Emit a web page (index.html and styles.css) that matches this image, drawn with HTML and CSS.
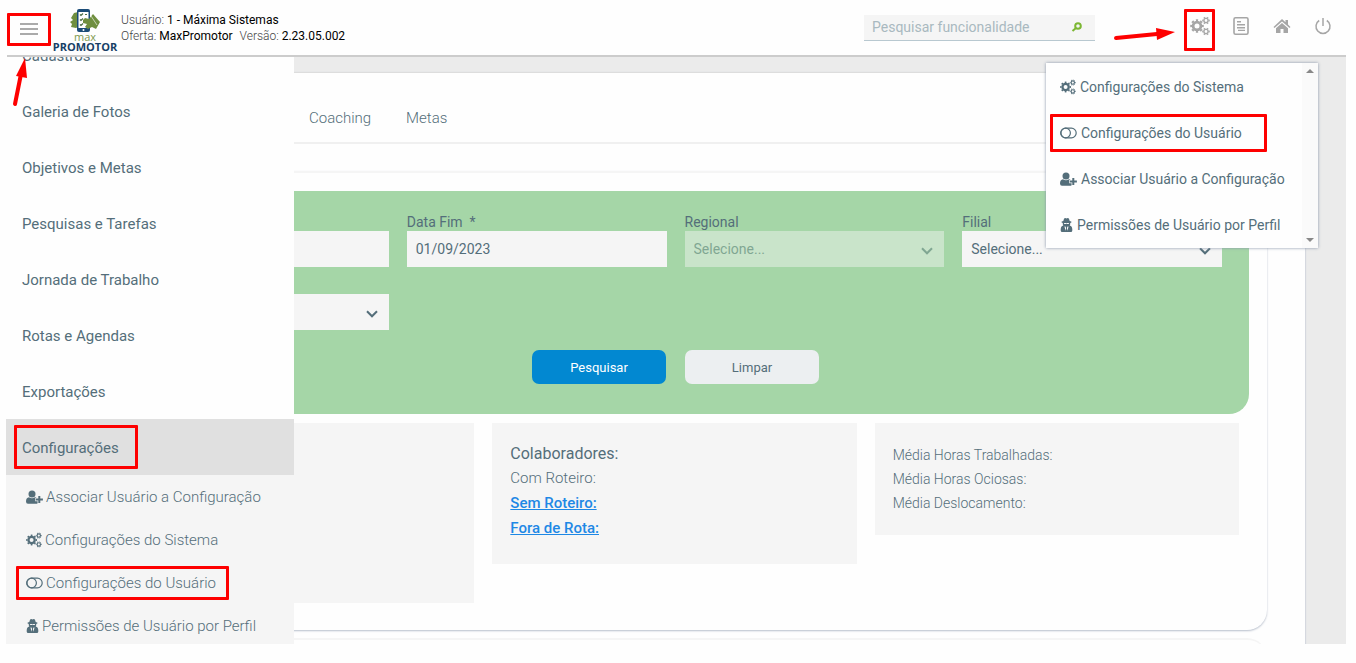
FILE: index.html
```
<!DOCTYPE html>
<html lang="pt-BR">
<head>
	<meta charset="utf-8"/>
	<title>MaxPromotor</title>
	<link rel="stylesheet" href="styles.css">
</head>
<body>
	<!-- shared icons -->
	<svg class="sprite" aria-hidden="true">
		<symbol id="i-cogs" viewBox="0 0 20 20">
			<g fill="none" stroke="currentColor">
				<circle cx="7" cy="10" r="3.9" stroke-width="2.8"/>
				<circle cx="7" cy="10" r="5.9" stroke-width="1.8" pathLength="16" stroke-dasharray="1 1" stroke-dashoffset=".5"/>
				<circle cx="16" cy="4.500" r="2.100" stroke-width="1.400"/>
				<circle cx="16" cy="4.500" r="3.200" stroke-width="1.200" pathLength="12" stroke-dasharray="1 1" stroke-dashoffset=".5"/>
				<circle cx="16" cy="15.500" r="2.100" stroke-width="1.400"/>
				<circle cx="16" cy="15.500" r="3.200" stroke-width="1.200" pathLength="12" stroke-dasharray="1 1" stroke-dashoffset=".5"/>
			</g>
		</symbol>
		<symbol id="i-toggle" viewBox="0 0 17 12">
			<g fill="none" stroke="currentColor" stroke-width="1.2">
				<rect x=".8" y="1.2" width="15.4" height="9.6" rx="4.8"/>
				<circle cx="5.6" cy="6" r="4.8"/>
			</g>
		</symbol>
		<symbol id="i-user-plus" viewBox="0 0 17 14">
			<g fill="currentColor">
				<circle cx="6" cy="4" r="3.500"/>
				<path d="M3 7.200Q6 9.400 9 7.200Q10 7.300 10.600 8H9.200v3.200h2.400v2q-.6.600-1.600.6H2Q0 13.800 0 11.600 0 7.600 3 7.200z"/>
				<path d="M12.300 6h2v2.500h2.600v2h-2.600V13h-2v-2.500H9.800v-2h2.500z"/>
			</g>
		</symbol>
		<symbol id="i-secret" viewBox="0 0 12 14">
			<path fill="currentColor" fill-rule="evenodd" d="M2.800 3L3.600.4q1.200-.6 2.400 0 1.200-.6 2.400 0L9.200 3q1.900.4 1.900 1T9.700 5q.2 1.600-.5 2.600 2.600.7 2.600 3.900v1Q11.800 14 10.300 14H1.700Q.2 14 .2 12.500v-1q0-3.200 2.600-3.900Q2.100 6.600 2.300 5 .9 4.700.9 4t1.900-1zM3.600 5.100v.8l1.700.2.7-.5.700.5 1.700-.2v-.8zM4 8.600l1 4.200.6-2.700-.6-1.500zM8 8.600l-1 4.200-.6-2.700.6-1.500z"/>
		</symbol>
		<symbol id="i-down" viewBox="0 0 12 8">
			<path d="M1 1.300l5 5 5-5" fill="none" stroke="currentColor" stroke-width="2"/>
		</symbol>
	</svg>

	<header class="topbar">
		<button type="button" class="menu-btn marked" aria-label="Menu"><span></span><span></span><span></span></button>
		<div class="logo">
			<svg class="logo-img" viewBox="0 0 30 24" aria-hidden="true">
				<path fill="#6f8f3f" d="M8 3L4 4 1 9l2 2-3 2 2 2-1 3 5 1 2-1z"/>
				<rect x="7" y="0" width="13" height="23" rx="2" fill="#1b4c78"/>
				<rect x="8.500" y="3" width="10" height="16" fill="#fff"/>
				<path d="M10 5.500l1 1 2-2M10 10.500l1 1 2-2M10 15.500l1 1 2-2M15 5.500h2" fill="none" stroke="#4d7048" stroke-width="1.200"/>
				<path fill="#6f8f3f" d="M13 11l2-2 4 1 4-5 7 8-4 7-4-2-4 2-3-2 2-3-4-1z"/>
				<path d="M21 7l6 9" stroke="#fff" stroke-width=".6"/>
				<circle cx="13.500" cy="21" r="1" fill="#fff"/>
			</svg>
			<span class="logo-max">max</span>
			<span class="logo-name">PROMOTOR</span>
		</div>
		<div class="info">
			<div>Usuário: <b>1 - Máxima Sistemas</b></div>
			<div>Oferta: <b class="offer">MaxPromotor</b> Versão: <b>2.23.05.002</b></div>
		</div>
		<div class="search">
			<input type="text" placeholder="Pesquisar funcionalidade" aria-label="Pesquisar funcionalidade">
			<svg width="12" height="10" viewBox="0 0 12 10" aria-hidden="true"><g fill="none" stroke="#7cb733" stroke-width="2"><circle cx="7" cy="4" r="2.800"/><path d="M5 6L1.500 9"/></g></svg>
		</div>
		<nav class="tools">
			<button type="button" class="marked" aria-label="Configurações"><svg width="20" height="20"><use href="#i-cogs"/></svg></button>
			<button type="button" aria-label="Relatórios"><svg width="18" height="20" viewBox="0 0 18 20"><rect x="2" y="1.800" width="14" height="16.400" rx="1.500" fill="none" stroke="currentColor" stroke-width="1.600"/><path d="M5 5.700h4M5 8.700h8M5 11.700h8M6 14.400h7" stroke="currentColor" stroke-width="1.400"/></svg></button>
			<button type="button" aria-label="Início"><svg width="18" height="16" viewBox="0 0 18 16"><path fill="currentColor" d="M9 1l3.500 3.200V2H15v4.500L17.500 9l-1 1L9 3.400 1.500 10l-1-1zM9 5l6 5.200V15h-4.500v-4h-3v4H3v-4.800z"/></svg></button>
			<button type="button" aria-label="Sair"><svg width="18" height="18" viewBox="0 0 18 18"><path d="M5.200 3.500a7 7 0 1 0 7.600 0M9 1v8" fill="none" stroke="currentColor" stroke-width="1.500"/></svg></button>
		</nav>

		<div class="dropdown">
			<ul>
				<li><a href="#"><svg width="16" height="16"><use href="#i-cogs"/></svg>Configurações do Sistema</a></li>
				<li><a href="#" class="marked"><svg width="17" height="12"><use href="#i-toggle"/></svg>Configurações do Usuário</a></li>
				<li><a href="#"><svg width="17" height="14"><use href="#i-user-plus"/></svg>Associar Usuário a Configuração</a></li>
				<li><a href="#"><svg width="13" height="14"><use href="#i-secret"/></svg>Permissões de Usuário por Perfil</a></li>
			</ul>
			<div class="track"><i class="up"></i><i class="down"></i></div>
		</div>
	</header>

	<div class="stage">
		<main class="page">
			<nav class="tabs">
				<a href="#">Coaching</a>
				<a href="#">Metas</a>
			</nav>
			<section class="box">
				<form class="filter">
					<div class="fields">
						<div class="field">
							<label for="start">&nbsp;</label>
							<input type="text" id="start">
						</div>
						<div class="field">
							<label for="end">Data Fim &nbsp;*</label>
							<input type="text" id="end" value="01/09/2023">
						</div>
						<div class="field">
							<label for="region">Regional</label>
							<div class="select disabled">
								<select id="region" disabled><option>Selecione...</option></select>
								<svg width="12" height="8"><use href="#i-down"/></svg>
							</div>
						</div>
						<div class="field">
							<label for="branch">Filial</label>
							<div class="select">
								<select id="branch"><option>Selecione...</option></select>
								<svg width="12" height="8"><use href="#i-down"/></svg>
							</div>
						</div>
						<div class="field">
							<label for="extra">&nbsp;</label>
							<div class="select">
								<select id="extra"><option></option></select>
								<svg width="12" height="8"><use href="#i-down"/></svg>
							</div>
						</div>
					</div>
					<div class="actions">
						<button type="button" class="btn primary">Pesquisar</button>
						<button type="button" class="btn">Limpar</button>
					</div>
				</form>
				<div class="cards">
					<div class="card tall"></div>
					<div class="card people">
						<h2>Colaboradores:</h2>
						<p>Com Roteiro:</p>
						<p><a href="#">Sem Roteiro:</a></p>
						<p><a href="#">Fora de Rota:</a></p>
					</div>
					<div class="card hours">
						<p>Média Horas Trabalhadas:</p>
						<p>Média Horas Ociosas:</p>
						<p>Média Deslocamento:</p>
					</div>
				</div>
			</section>
			<section class="box next"></section>
		</main>

		<!-- opened over the page -->
		<aside class="sidebar">
			<ul class="nav">
				<li><a href="#">Cadastros</a></li>
				<li><a href="#">Galeria de Fotos</a></li>
				<li><a href="#">Objetivos e Metas</a></li>
				<li><a href="#">Pesquisas e Tarefas</a></li>
				<li><a href="#">Jornada de Trabalho</a></li>
				<li><a href="#">Rotas e Agendas</a></li>
				<li><a href="#">Exportações</a></li>
				<li class="active"><a href="#" class="marked">Configurações</a></li>
			</ul>
			<ul class="subnav">
				<li><a href="#"><svg width="17" height="14"><use href="#i-user-plus"/></svg>Associar Usuário a Configuração</a></li>
				<li><a href="#"><svg width="16" height="16"><use href="#i-cogs"/></svg>Configurações do Sistema</a></li>
				<li><a href="#" class="marked"><svg width="17" height="12"><use href="#i-toggle"/></svg>Configurações do Usuário</a></li>
				<li><a href="#"><svg width="13" height="14"><use href="#i-secret"/></svg>Permissões de Usuário por Perfil</a></li>
			</ul>
		</aside>
	</div>

	<svg class="arrow arrow-menu" width="20" height="50" viewBox="0 0 20 50" aria-hidden="true"><path d="M5 46L11 16" stroke="#fe0000" stroke-width="4" stroke-linecap="round"/><path d="M15 0L6 18l11 2z" fill="#fe0000"/></svg>
	<svg class="arrow arrow-tools" width="64" height="14" viewBox="0 0 64 14" aria-hidden="true"><path d="M3 10L44 6" stroke="#fe0000" stroke-width="4" stroke-linecap="round"/><path d="M62 4L43 0l1 12z" fill="#fe0000"/></svg>
</body>
</html>
```
FILE: styles.css
```
* {
	box-sizing: border-box;
}
body {
	margin: 0;
	background: #fefefe;
	font-family: Roboto, "Liberation Sans", sans-serif;
	font-size: 14px;
	color: #546e7a;
	overflow: hidden;
}
ul {
	list-style: none;
	margin: 0;
	padding: 0;
}
a {
	color: inherit;
	text-decoration: none;
}
button {
	font-family: inherit;
	color: inherit;
	border: 0;
	padding: 0;
	background: none;
}
.sprite {
	position: absolute;
	width: 0;
	height: 0;
}
.marked {
	outline: 3px solid #fe0000;
	outline-offset: -3px;
	border-radius: 1px;
}

/* top bar */
.topbar {
	position: relative;
	z-index: 3;
	display: flex;
	align-items: center;
	height: 57px;
	margin: 0 10px 0 7px;
	border-bottom: 2px solid #ccc;
	background: #fefefe;
}
.menu-btn {
	display: flex;
	flex-direction: column;
	align-items: center;
	justify-content: center;
	gap: 3px;
	width: 44px;
	height: 33px;
	margin-top: 3px;
}
.menu-btn span {
	width: 18px;
	height: 2px;
	background: #aaa;
}
.logo {
	display: flex;
	flex-direction: column;
	align-items: center;
	width: 64px;
	margin: 6px 4px 0 2px;
}
.logo-img {
	width: 30px;
	height: 24px;
}
.logo-max {
	font: 11px/8px "Open Sans", sans-serif;
	color: #7d9a4e;
}
.logo-name {
	font: bold 11px/12px "Open Sans", sans-serif;
	color: #173f66;
}
.info {
	font-size: 12px;
	line-height: 16px;
	font-weight: 300;
	color: #444;
}
.info b {
	font-weight: 400;
	color: #000;
}
.info .offer {
	margin-right: 4px;
}
.search {
	display: flex;
	align-items: center;
	width: 231px;
	height: 26px;
	margin-left: auto;
	padding: 0 12px 0 8px;
	background: #f5f5f5;
	border-bottom: 1px solid #b8c8d0;
}
.search input {
	flex: 1;
	min-width: 0;
	border: 0;
	padding: 0;
	background: none;
	font: 14px Roboto, sans-serif;
}
.search input::placeholder {
	color: #a9b9c0;
}
.tools {
	display: flex;
	align-items: center;
	gap: 10px;
	margin: 4px 8px 0 89px;
	color: #a6a6a6;
}
.tools button {
	display: flex;
	align-items: center;
	justify-content: center;
	width: 31px;
	height: 42px;
	padding-bottom: 8px;
}

.dropdown {
	position: absolute;
	top: 63px;
	right: 28px;
	display: flex;
	width: 272px;
	background: #fefefe;
	box-shadow: 0 0 3px #8794a8;
}
.dropdown ul {
	flex: 1;
	padding-top: 1px;
}
.dropdown li {
	display: flex;
	align-items: center;
	height: 46px;
	padding-left: 4px;
}
.dropdown a {
	display: flex;
	align-items: center;
	gap: 4px;
	height: 38px;
	padding: 0 25px 0 10px;
	white-space: nowrap;
}
.dropdown li:nth-child(n+3) a {
	padding-right: 0;
}
.track {
	display: flex;
	flex-direction: column;
	align-items: center;
	justify-content: space-between;
	width: 16px;
	padding: 6px 0;
	background: #fafafa;
}
.track i {
	border: 4px solid transparent;
}
.track .up {
	border-top: 0;
	border-bottom-color: #888;
}
.track .down {
	border-bottom: 0;
	border-top-color: #888;
}

/* page */
.stage {
	position: relative;
	height: calc(100vh - 76px);
	margin: 0 10px 0 6px;
	padding: 15px 41px 0 40px;
	background: #ebebeb;
	overflow: hidden;
}
.page {
	min-height: 100%;
	padding: 0 38px;
	background: #fefefe;
	border-top: 1px solid #ddd;
	box-shadow: 1px 0 1px #d5d8df;
}
.tabs {
	display: flex;
	align-items: flex-end;
	gap: 35px;
	height: 71px;
	margin: 0 -38px;
	padding: 0 0 14px 263px;
	border-bottom: 2px solid #f0f0f0;
	font-size: 15px;
	font-weight: 300;
	line-height: 20px;
}
.box {
	margin-top: 27px;
	padding: 18px 18px 27px;
	border-top: 2px solid #f5f5f5;
	border-radius: 20px;
	box-shadow: 0 1px 2px #b8bfcc;
}
.box.next {
	height: 60px;
	margin-top: 8px;
	box-shadow: none;
}
.filter {
	padding: 22px 27px 30px;
	background: #a5d6a7;
	border-radius: 20px;
}
.fields {
	display: grid;
	grid-template-columns: repeat(4, 1fr);
	gap: 9px 18px;
}
.field label {
	display: block;
	height: 18px;
	line-height: 18px;
}
.field input,
.field select {
	display: block;
	width: 100%;
	height: 36px;
	padding: 0 9px;
	border: 0;
	border-radius: 0;
	background: #f5f5f5;
	color: #546e7a;
	font: 14px Roboto, sans-serif;
	appearance: none;
	opacity: 1;
}
.select {
	position: relative;
}
.select svg {
	position: absolute;
	right: 11px;
	top: 16px;
}
.select.disabled {
	opacity: .45;
}
.actions {
	display: flex;
	justify-content: center;
	gap: 19px;
	margin-top: 20px;
}
.btn {
	width: 134px;
	height: 34px;
	border-radius: 7px;
	background: #eceff1;
	color: #546e7a;
	font-size: 13px;
}
.btn.primary {
	background: #0288d1;
	color: #fff;
}
.cards {
	display: grid;
	grid-template-columns: repeat(3, 1fr);
	align-items: start;
	gap: 18px;
	margin: 9px 10px 0 8px;
}
.card {
	padding: 18px;
	background: #f5f5f5;
}
.card.tall {
	min-height: 180px;
}
.card h2,
.card p {
	margin: 0;
	font-size: 14px;
	font-weight: 300;
	line-height: 24px;
}
.people {
	padding-bottom: 23px;
}
.people h2,
.people p {
	font-size: 15px;
	line-height: 25px;
}
.people h2 {
	font-size: 16px;
	font-weight: 400;
}
.people a {
	color: #1e88e5;
	font-weight: 500;
	text-decoration: underline;
}
.hours {
	padding: 20px 18px;
}

/* sidebar */
.sidebar {
	position: absolute;
	top: 0;
	left: 0;
	width: 288px;
	height: 100%;
	background: #fefefe;
	overflow: hidden;
}
/* list scrolled down a little */
.nav {
	margin-top: -30px;
	font-size: 15px;
}
.nav li {
	display: flex;
	align-items: center;
	height: 56px;
	padding-left: 8px;
}
.nav a {
	height: 44px;
	padding: 0 19px 0 8px;
	line-height: 47px;
}
.nav .active {
	background: #e0e0e0;
}
.subnav {
	background: #f5f5f5;
	font-size: 15px;
	font-weight: 300;
}
.subnav li {
	display: flex;
	align-items: center;
	height: 43px;
	padding-left: 10px;
}
.subnav a {
	display: flex;
	align-items: center;
	gap: 3px;
	height: 34px;
	padding: 0 13px 0 10px;
	white-space: nowrap;
}

.arrow {
	position: absolute;
	z-index: 4;
}
.arrow-menu {
	left: 10px;
	top: 58px;
}
.arrow-tools {
	left: 1113px;
	top: 28px;
}
```
